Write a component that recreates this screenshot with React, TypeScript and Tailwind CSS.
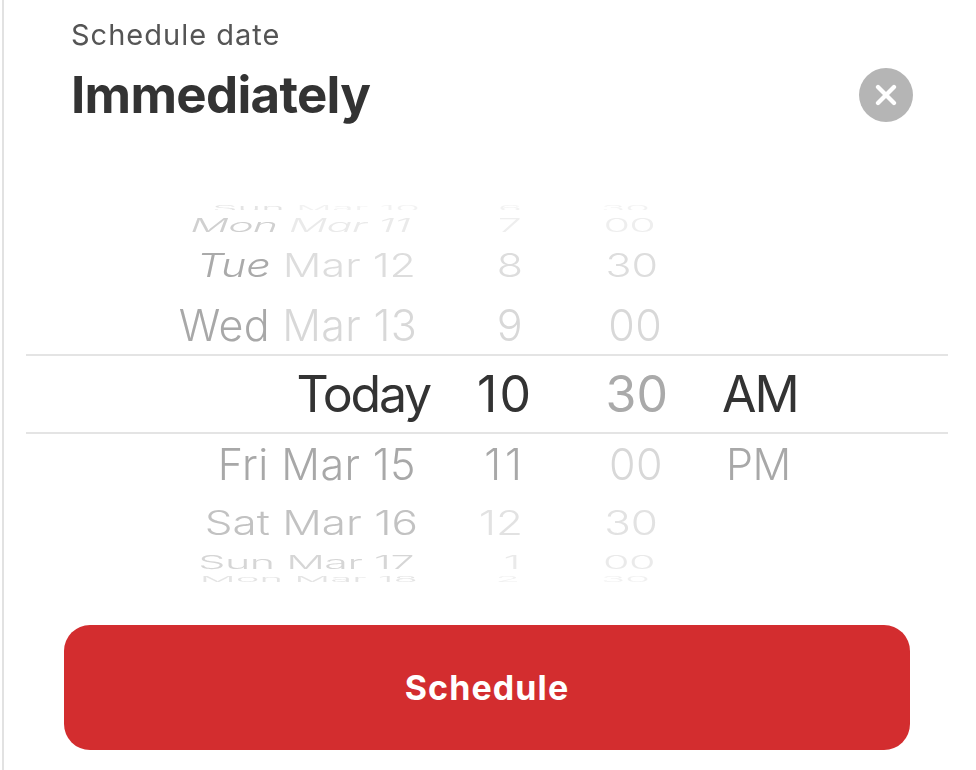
import { X } from "lucide-react"

type Cell = { text: string; cls: string }

function Row({
  className,
  textClass,
  dayText,
  dayClass,
  dateText,
  dateClass,
  dateWidth,
  hour,
  minute,
  suffix,
}: {
  className: string
  textClass: string
  dayText: string
  dayClass: string
  dateText: string
  dateClass: string
  dateWidth: string
  hour: Cell & { width: string }
  minute: Cell & { width: string }
  suffix?: React.ReactNode
}) {
  return (
    <div className={`flex items-center overflow-hidden whitespace-nowrap ${className}`}>
      <div className={`shrink-0 text-right ${dateWidth} ${textClass}`}>
        <span className={dayClass}>{dayText}</span>{" "}
        <span className={dateClass}>{dateText}</span>
      </div>
      <div className={`shrink-0 text-right ${hour.width} ${hour.cls} ${textClass}`}>{hour.text}</div>
      <div className={`shrink-0 text-right ${minute.width} ${minute.cls} ${textClass}`}>{minute.text}</div>
      {suffix}
    </div>
  )
}

export default function App() {
  return (
    <div className="h-[770px] w-[976px] overflow-hidden bg-white pl-[2px] font-['Inter',sans-serif]">
      <div className="flex h-full flex-col border-l-2 border-[#e2e2e2]">
        {/* header */}
        <div className="flex h-[205px] items-start justify-between pl-[67px] pr-[63px]">
          <div>
            <div className="mt-[16px] text-[29px] leading-[38px] tracking-[1px] text-[#555555] blur-[0.5px]">
              Schedule date
            </div>
            <div className="mt-[11px] text-[51px] font-bold leading-[60px] tracking-[-0.7px] text-[#333333] blur-[0.5px]">
              Immediately
            </div>
          </div>
          <button className="mt-[68px] flex size-[54px] items-center justify-center rounded-full bg-[#b5b5b5] text-white">
            <X className="size-[32px] blur-[0.3px]" strokeWidth={3.2} />
          </button>
        </div>

        {/* wheel */}
        <div className="ml-[22px] w-[922px] font-light">
          <div className="blur-[0.6px]">
            <Row
              className="h-[5px]"
              textClass="text-[40px] leading-none scale-y-[0.2]"
              dayText="Sun"
              dayClass="text-[#e4e4e4]"
              dateText="Mar 10"
              dateClass="text-[#f2f2f2]"
              dateWidth="w-[394px]"
              hour={{ text: "6", cls: "text-[#f2f2f2]", width: "w-[102px]" }}
              minute={{ text: "30", cls: "text-[#f2f2f2]", width: "w-[128px]" }}
            />
            <Row
              className="mt-[2px] h-[26px]"
              textClass="text-[43px] leading-none scale-y-[0.42] tracking-[-0.8px]"
              dayText="Mon"
              dayClass="text-[#d0d0d0] italic"
              dateText="Mar 11"
              dateClass="text-[#eaeaea] italic"
              dateWidth="w-[384px]"
              hour={{ text: "7", cls: "text-[#eeeeee]", width: "w-[111px]" }}
              minute={{ text: "00", cls: "text-[#eeeeee]", width: "w-[134px]" }}
            />
            <Row
              className="mt-[7px] h-[40px]"
              textClass="text-[43px] leading-none scale-y-[0.76]"
              dayText="Tue"
              dayClass="text-[#aaaaaa] italic"
              dateText="Mar 12"
              dateClass="text-[#dddddd]"
              dateWidth="w-[390px]"
              hour={{ text: "8", cls: "text-[#dddddd]", width: "w-[107px]" }}
              minute={{ text: "30", cls: "text-[#dddddd]", width: "w-[135px]" }}
            />
            <Row
              className="mt-[15px] h-[50px]"
              textClass="text-[43px] leading-none tracking-[0.3px]"
              dayText="Wed"
              dayClass="text-[#a8a8a8]"
              dateText="Mar 13"
              dateClass="text-[#d8d8d8]"
              dateWidth="w-[391px]"
              hour={{ text: "9", cls: "text-[#d8d8d8]", width: "w-[106px]" }}
              minute={{ text: "00", cls: "text-[#d8d8d8]", width: "w-[139px]" }}
            />
          </div>
          <Row
            className="mt-[4px] h-[80px] border-y-2 border-[#e4e4e4]"
            textClass="text-[50px] leading-none font-normal blur-[0.5px]"
            dayText="Today"
            dayClass="text-[#333333] tracking-[-2.2px]"
            dateText=""
            dateClass=""
            dateWidth="w-[404px]"
            hour={{ text: "10", cls: "text-[#333333] tracking-[2px]", width: "w-[103px]" }}
            minute={{ text: "30", cls: "text-[#aaaaaa]", width: "w-[135px]" }}
            suffix={
              <div className="pl-[54px] text-[50px] font-normal leading-none tracking-[-2px] text-[#333333] blur-[0.5px]">
                AM
              </div>
            }
          />
          <div className="blur-[0.6px]">
            <Row
              className="mt-[5px] h-[50px]"
              textClass="text-[43px] leading-none tracking-[0.4px]"
              dayText="Fri"
              dayClass="text-[#a8a8a8]"
              dateText="Mar 15"
              dateClass="text-[#a8a8a8]"
              dateWidth="w-[390px]"
              hour={{ text: "11", cls: "text-[#a8a8a8] tracking-[4px]", width: "w-[110px]" }}
              minute={{ text: "00", cls: "text-[#d8d8d8]", width: "w-[137px]" }}
              suffix={
                <div className="pl-[63px] text-[43px] leading-none tracking-[-0.5px] text-[#a8a8a8]">PM</div>
              }
            />
            <Row
              className="mt-[12px] h-[44px]"
              textClass="text-[44px] leading-none scale-y-[0.76]"
              dayText="Sat"
              dayClass="text-[#c2c2c2]"
              dateText="Mar 16"
              dateClass="text-[#c2c2c2]"
              dateWidth="w-[392px]"
              hour={{ text: "12", cls: "text-[#e2e2e2]", width: "w-[105px]" }}
              minute={{ text: "30", cls: "text-[#e2e2e2]", width: "w-[135px]" }}
            />
            <Row
              className="mt-[4px] h-[26px]"
              textClass="text-[43px] leading-none scale-y-[0.42] tracking-[-0.5px]"
              dayText="Sun"
              dayClass="text-[#d6d6d6]"
              dateText="Mar 17"
              dateClass="text-[#d6d6d6]"
              dateWidth="w-[388px]"
              hour={{ text: "1", cls: "text-[#eaeaea]", width: "w-[106px]" }}
              minute={{ text: "00", cls: "text-[#eaeaea]", width: "w-[135px]" }}
            />
            <Row
              className="h-[7px]"
              textClass="text-[40px] leading-none scale-y-[0.2]"
              dayText="Mon"
              dayClass="text-[#e4e4e4]"
              dateText="Mar 18"
              dateClass="text-[#e4e4e4]"
              dateWidth="w-[392px]"
              hour={{ text: "2", cls: "text-[#f0f0f0]", width: "w-[102px]" }}
              minute={{ text: "30", cls: "text-[#f0f0f0]", width: "w-[130px]" }}
            />
          </div>
        </div>

        {/* action */}
        <div className="mt-[43px] pl-[60px]">
          <button className="flex h-[125px] w-[846px] items-center justify-center rounded-[26px] bg-[#d32d2f] text-[34px] font-bold tracking-[1.1px] text-white">
            Schedule
          </button>
        </div>
      </div>
    </div>
  )
}
